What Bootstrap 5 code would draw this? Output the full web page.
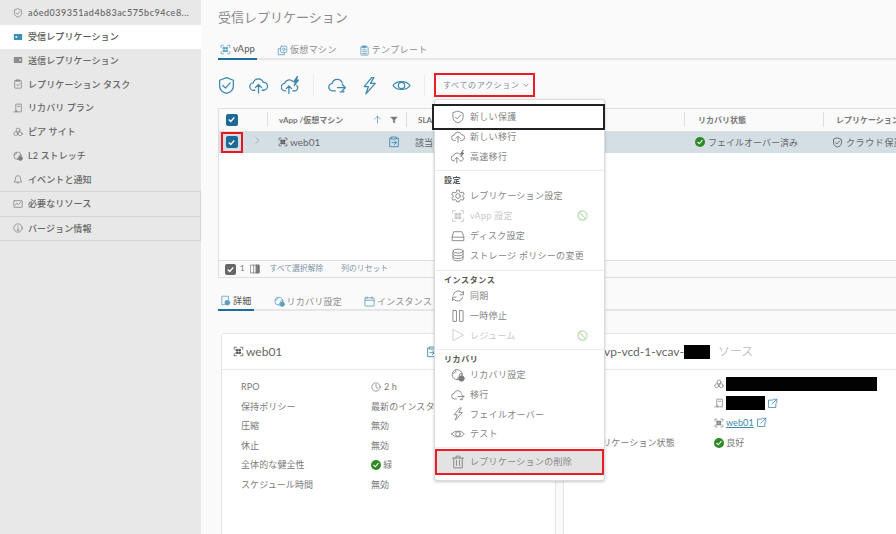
<!DOCTYPE html>
<html lang="ja">
<head>
<meta charset="utf-8">
<title>受信レプリケーション</title>
<link rel="stylesheet" href="https://cdn.jsdelivr.net/npm/bootstrap@5.3.0/dist/css/bootstrap.min.css">
<style>
html,body{height:534px;overflow:hidden;background:#fafafa;font-family:"Lato","Noto Sans CJK JP",sans-serif;font-size:9px;color:#6d6d6d}
.ico{width:12px;height:12px;flex:none;fill:none;stroke:currentColor;stroke-width:2.6;stroke-linecap:round;stroke-linejoin:round}
.shell{width:896px;height:534px;overflow:hidden}
.side{width:201px;flex:none;background:#e7e8e7;padding-top:1px}
.side-row{display:flex;align-items:center;gap:5px;height:23.8px;padding-left:13px;color:#666;letter-spacing:.1px;font-weight:500;text-decoration:none}
.side-row .ico{width:10px;height:10px;color:#7c7c7c}
.side-row.on{background:#fff;color:#555}
.side-row.on .ico{color:#3f8db5}
.side-id{letter-spacing:.5px}
.side-box{border:1px solid #d2d3d2;border-width:1px 1px 0 0;height:24.5px}
.side-box.end{border-bottom-width:1px;height:25px}
.pane{flex:1;min-width:0;padding-left:17px;position:relative}
.page-title{font-size:13px;font-weight:400;color:#8a8a8a;margin:0;padding-top:9px;height:40px;line-height:17px}
.tabbar{display:flex;border-bottom:2px solid #e6e6e6;height:20px;margin:0;padding:0;list-style:none}
.tabbar a{display:flex;align-items:center;gap:2px;height:20px;padding:0 2px;color:#8c8c8c;text-decoration:none;letter-spacing:.35px}
.tabbar .ico{width:11px;height:11px;color:#5d9dbd}
.tabbar a.on{color:#555;border-bottom:2px solid #1b6f9c;font-size:9.5px;letter-spacing:.1px}
.tabs-top{gap:18px}
.tabs-low{gap:18px;margin-top:14px;height:19px}
.tabs-low a,.tabs-low a.on{height:19px;font-size:9px;letter-spacing:.25px}
.tools{display:flex;align-items:center;height:24px;margin-top:13px}
.tool{color:#3c87ad;display:flex;width:32px;justify-content:center}
.tool-first{margin-left:-8px}
.tool .ico{width:19px;height:19px;stroke-width:2.4}
.tool-sep{width:1px;height:22px;background:#ececec;margin:0 7px}
.act-btn{--bs-btn-padding-x:7px;--bs-btn-padding-y:0;--bs-btn-font-size:8px;--bs-btn-color:#7c8f9b;--bs-btn-border-color:#ee1c25;--bs-btn-border-width:2px;--bs-btn-border-radius:0;--bs-btn-line-height:20px;display:flex;align-items:center;gap:3px;width:101px;white-space:nowrap;letter-spacing:.65px;margin-left:2px}
.gridbox{margin-top:11px;height:170px;background:#fff;border:1px solid #dfdfdf;border-right:0;border-radius:2px 0 0 2px;display:flex;flex-direction:column}
.gridbox table{table-layout:fixed;width:678px;margin:0;--bs-table-bg:transparent;--bs-table-color:#6d6d6d}
.gridbox th,.gridbox td{padding:0;border:0;vertical-align:middle;white-space:nowrap;overflow:hidden}
.gridbox thead th{height:22px;background:#fafafa;font-size:8px;font-weight:700;color:#777;border-bottom:1px solid #e0e0e0}
.gridbox tbody td{height:22px;background:#d4dee5;color:#666;font-size:9px}
.cellin{display:flex;align-items:center;height:100%;gap:3px}
.sepl{border-left:1px solid #dedede;height:15px}
.checkmark{width:12px;height:12px;border-radius:2px;background:#1d6a96;display:inline-flex;align-items:center;justify-content:center}
.checkmark svg{width:9px;height:9px;fill:none;stroke:#fff;stroke-width:5}
.hl-check{display:inline-flex;align-items:center;justify-content:center;width:22px;height:21px;border:2px solid #e8141f}
.gfoot{margin-top:auto;height:17px;border-top:1px solid #dfdfdf;background:#fafafa;display:flex;align-items:center;padding-left:6px;font-size:7.8px;color:#7d95a4}
.gfoot .checkmark{background:#666;width:11px;height:11px}
.cards{display:flex;gap:7px;margin-top:22px;margin-left:3px}
.pcard{--bs-card-border-color:#e4e4e4;--bs-card-border-radius:3px;--bs-card-bg:#fff;height:220px;flex:none;width:335px}
.pcard.right{width:340px}
.pcard-top{height:36px;border-bottom:1px solid #e8e8e8;display:flex;align-items:center;font-size:12px;color:#666}
.dl-row{display:flex;height:19.6px;align-items:center;font-size:9px;color:#7a7a7a;letter-spacing:.1px}
.dl-key{width:130px}
.redact{background:#000;height:14px;display:inline-block}
.okdot{width:10px;height:10px;border-radius:50%;background:#2e8a24;display:inline-flex;align-items:center;justify-content:center;flex:none}
.okdot svg{width:8px;height:8px;fill:none;stroke:#fff;stroke-width:5}
.ext{color:#3c87ad;width:11px;height:11px}
.pop{--bs-dropdown-padding-y:0;--bs-dropdown-min-width:170px;--bs-dropdown-border-color:#dcdcdc;--bs-dropdown-border-radius:3px;--bs-dropdown-font-size:9px;--bs-dropdown-divider-margin-y:0;--bs-dropdown-divider-bg:#ececec;--bs-dropdown-link-color:#858585;--bs-dropdown-header-padding-x:0;--bs-dropdown-header-padding-y:0;--bs-dropdown-header-color:#555;display:block;position:absolute;left:233px;top:99px;width:171px;height:382px;padding-top:6px;box-shadow:0 1px 3px rgba(0,0,0,.22);letter-spacing:.3px;font-size:9px;z-index:5}
.pop .dropdown-item{display:flex;align-items:center;gap:5px;height:19.7px;padding:0 0 0 16px;font-size:9px;position:relative}
.pop .dropdown-item .ico{width:14px;height:14px;color:#7c7c7c;stroke-width:2.2}
.pop .dropdown-item.off{color:#c9c9c9}
.pop .dropdown-item.off .ico{color:#c9c9c9}
.pop .dropdown-item.off .ban{color:#b5dcae;width:11px;height:11px;margin-left:auto;margin-right:16px;stroke-width:3.8}
.pop .dropdown-item.first{outline:2px solid #222;margin:0 -1px -1px;height:22px;padding-left:17px;background:#fff}
.pop .dropdown-divider{margin:4px 0 3px}
.pop .dropdown-divider.wide{margin-top:5px}
.pop .dropdown-divider.tight{margin:3px 0 1px}
.pop .dropdown-header{height:12px;line-height:12px;padding:0 0 0 9px;font-size:8px;font-weight:700;color:#555;letter-spacing:.6px}
.pop .dropdown-item.del{height:26px;margin:0;background:#e2e3e2;border:2px solid #ee1c25;padding-left:14px;color:#8a8a8a}
.link-web{color:#3c87ad;text-decoration:underline}
</style>
</head>
<body>
<svg width="0" height="0" class="position-absolute">
<defs>
<symbol id="shield" viewBox="0 0 36 36"><path d="M18 3 31 8V19C31 26 25 31 18 33 11 31 5 26 5 19V8Z"/><path d="M11 18l5 5 9-10"/></symbol>
<symbol id="cloudup" viewBox="0 0 36 36"><path d="M11 27H9A7 7 0 0 1 8 13 10 10 0 0 1 27 12 7.5 7.5 0 0 1 28 27H25"/><path d="M18 32V17M12 22l6-6 6 6"/></symbol>
<symbol id="cloudbolt" viewBox="0 0 36 36"><path d="M9 28H8A7 7 0 0 1 7 14 9 9 0 0 1 22 10"/><path d="M22 28H27A6 6 0 0 0 30 18"/><path d="M15 33V19M10 24l5-5 5 5"/><path d="M31 1 24 11H28L25 18 33 8H29Z" fill="currentColor"/></symbol>
<symbol id="cloudmove" viewBox="0 0 36 36"><path d="M14 28H9A7 7 0 0 1 8 14 10 10 0 0 1 27 13"/><path d="M18 22H33M27 16l6 6-6 6"/><path d="M30 29V30H23"/></symbol>
<symbol id="bolt" viewBox="0 0 36 36"><path d="M22 3 8 20H16L11 34 29 14H20L26 3Z"/></symbol>
<symbol id="eye" viewBox="0 0 36 36"><path d="M2 18C8 8 28 8 34 18 28 28 8 28 2 18Z"/><circle cx="18" cy="18" r="6"/></symbol>
<symbol id="vapp" viewBox="0 0 36 36"><path d="M4 11V4H11M25 4H32V11M32 25V32H25M11 32H4V25"/><path d="M11 11h5v5h-5zM20 11h5v5h-5zM11 20h5v5h-5zM20 20h5v5h-5z" fill="currentColor"/></symbol>
<symbol id="vm" viewBox="0 0 36 36"><rect x="12" y="4" width="20" height="20" rx="3"/><path d="M12 12H4V32H24V24"/><circle cx="22" cy="14" r="4"/></symbol>
<symbol id="tpl" viewBox="0 0 36 36"><rect x="6" y="6" width="24" height="27" rx="2"/><rect x="13" y="3" width="10" height="6" fill="currentColor"/><path d="M12 16H24M12 22H24M12 28H24"/></symbol>
<symbol id="inrep" viewBox="0 0 36 36"><rect x="3" y="7" width="30" height="22" fill="currentColor" stroke="none"/><rect x="9" y="15" width="6" height="6" fill="#fff" stroke="none"/></symbol>
<symbol id="outrep" viewBox="0 0 36 36"><rect x="3" y="7" width="30" height="22" fill="currentColor" stroke="none" opacity=".85"/><rect x="22" y="15" width="6" height="6" fill="#e7e8e7" stroke="none"/></symbol>
<symbol id="task" viewBox="0 0 36 36"><rect x="6" y="6" width="24" height="27" rx="2"/><rect x="13" y="3" width="10" height="5"/><path d="M12 20l5 5 8-9"/></symbol>
<symbol id="plan" viewBox="0 0 36 36"><path d="M10 30V4H30V32H14"/><path d="M3 32H14V26"/><path d="M16 12H24"/></symbol>
<symbol id="peer" viewBox="0 0 36 36"><circle cx="18" cy="11" r="7"/><circle cx="10" cy="24" r="7"/><circle cx="26" cy="24" r="7"/></symbol>
<symbol id="globe" viewBox="0 0 36 36"><circle cx="16" cy="17" r="13"/><path d="M4 13C12 15 14 8 12 5M16 30C14 24 22 24 22 18S27 14 28 14"/><circle cx="27" cy="27" r="7" fill="currentColor"/></symbol>
<symbol id="bell" viewBox="0 0 36 36"><path d="M5 28C9 24 9 20 9 15A9 9 0 0 1 27 15C27 20 27 24 31 28Z"/><path d="M15 32H21"/></symbol>
<symbol id="chart" viewBox="0 0 36 36"><rect x="3" y="6" width="30" height="24" rx="2"/><path d="M8 23 14 15 20 20 28 12"/></symbol>
<symbol id="info" viewBox="0 0 36 36"><circle cx="18" cy="18" r="15"/><path d="M18 16V26M15 26H21M18 10V11"/></symbol>
<symbol id="gear" viewBox="0 0 36 36"><circle cx="18" cy="18" r="6"/><path d="M15 3H21L22 8 26 10 31 8 34 14 30 17V20L34 23 31 29 26 27 22 29 21 33H15L14 29 10 27 5 29 2 23 6 20V17L2 14 5 8 10 10 14 8Z"/></symbol>
<symbol id="disk" viewBox="0 0 36 36"><path d="M8 7H28L33 20V30H3V20Z"/><path d="M3 21H33"/></symbol>
<symbol id="db" viewBox="0 0 36 36"><ellipse cx="18" cy="8" rx="13" ry="5"/><path d="M5 8V28C5 31 11 33 18 33S31 31 31 28V8M5 15C5 18 11 20 18 20S31 18 31 15M5 22C5 25 11 27 18 27S31 25 31 22"/></symbol>
<symbol id="sync" viewBox="0 0 36 36"><path d="M6 15A13 13 0 0 1 29 10L32 6V15H23"/><path d="M30 21A13 13 0 0 1 7 26L4 30V21H13"/></symbol>
<symbol id="pause" viewBox="0 0 36 36"><rect x="5" y="4" width="9" height="28" rx="1"/><rect x="22" y="4" width="9" height="28" rx="1"/></symbol>
<symbol id="play" viewBox="0 0 36 36"><path d="M6 4 32 18 6 32Z"/></symbol>
<symbol id="ban" viewBox="0 0 36 36"><circle cx="18" cy="18" r="15"/><path d="M8 8 28 28"/></symbol>
<symbol id="trash" viewBox="0 0 36 36"><path d="M4 8H32M13 8V3H23V8M7 8V33H29V8M14 14V27M22 14V27"/></symbol>
<symbol id="detail" viewBox="0 0 36 36"><path d="M28 14V4H6V32H16"/><circle cx="24" cy="25" r="8" fill="currentColor"/></symbol>
<symbol id="cal" viewBox="0 0 36 36"><rect x="3" y="6" width="30" height="27" rx="2"/><path d="M3 14H33M10 3V9M26 3V9"/></symbol>
<symbol id="clock" viewBox="0 0 36 36"><circle cx="18" cy="18" r="15"/><path d="M18 9V19L25 23"/></symbol>
<symbol id="clip" viewBox="0 0 36 36"><path d="M11 6H5V32H31V6H25"/><rect x="11" y="3" width="14" height="6"/><path d="M12 20H25M19 14l6 6-6 6"/></symbol>
<symbol id="extl" viewBox="0 0 36 36"><path d="M18 7H5V31H29V18"/><path d="M20 4H32V16M32 4 16 20"/></symbol>
<symbol id="tick" viewBox="0 0 36 36"><path d="M7 18l8 8 14-16"/></symbol>
<symbol id="cols" viewBox="0 0 36 36"><rect x="3" y="4" width="30" height="28"/><path d="M13 4V32M23 4V32"/><rect x="23" y="4" width="10" height="28" fill="currentColor"/></symbol>
<symbol id="arrowup" viewBox="0 0 36 36"><path d="M18 32V5M7 16 18 5 29 16"/></symbol>
<symbol id="funnel" viewBox="0 0 36 36"><path d="M4 5H32L21 18V31L15 28V18Z" fill="currentColor"/></symbol>
<symbol id="chev" viewBox="0 0 36 36"><path d="M10 4 26 18 10 32"/></symbol>
<symbol id="chevd" viewBox="0 0 36 36"><path d="M5 12 18 26 31 12"/></symbol>
</defs>
</svg>
<div class="shell d-flex">
  <nav class="side">
    <a class="side-row side-id" href="#"><svg class="ico"><use href="#shield"/></svg>a6ed039351ad4b83ac575bc94ce8...</a>
    <a class="side-row on" href="#"><svg class="ico"><use href="#inrep"/></svg>受信レプリケーション</a>
    <a class="side-row" href="#"><svg class="ico"><use href="#outrep"/></svg>送信レプリケーション</a>
    <a class="side-row" href="#"><svg class="ico"><use href="#task"/></svg>レプリケーション タスク</a>
    <a class="side-row" href="#"><svg class="ico"><use href="#plan"/></svg>リカバリ プラン</a>
    <a class="side-row" href="#"><svg class="ico"><use href="#peer"/></svg>ピア サイト</a>
    <a class="side-row" href="#"><svg class="ico"><use href="#globe"/></svg>L2 ストレッチ</a>
    <a class="side-row" href="#"><svg class="ico"><use href="#bell"/></svg>イベントと通知</a>
    <a class="side-row side-box" href="#"><svg class="ico"><use href="#chart"/></svg>必要なリソース</a>
    <a class="side-row side-box end" href="#"><svg class="ico"><use href="#info"/></svg>バージョン情報</a>
  </nav>
  <main class="pane">
    <h1 class="page-title">受信レプリケーション</h1>
    <ul class="tabbar tabs-top">
      <li><a class="on" href="#"><svg class="ico"><use href="#vapp"/></svg>vApp</a></li>
      <li><a href="#"><svg class="ico"><use href="#vm"/></svg>仮想マシン</a></li>
      <li><a href="#"><svg class="ico"><use href="#tpl"/></svg>テンプレート</a></li>
    </ul>
    <div class="tools">
      <span class="tool tool-first"><svg class="ico"><use href="#shield"/></svg></span>
      <span class="tool"><svg class="ico"><use href="#cloudup"/></svg></span>
      <span class="tool"><svg class="ico"><use href="#cloudbolt"/></svg></span>
      <span class="tool-sep"></span>
      <span class="tool"><svg class="ico"><use href="#cloudmove"/></svg></span>
      <span class="tool"><svg class="ico"><use href="#bolt"/></svg></span>
      <span class="tool"><svg class="ico"><use href="#eye"/></svg></span>
      <span class="tool-sep"></span>
      <button type="button" class="btn act-btn">すべてのアクション<svg class="ico" style="width:6px;height:6px;stroke-width:5"><use href="#chevd"/></svg></button>
    </div>
    <div class="gridbox">
      <table class="table">
        <colgroup><col style="width:25px"><col style="width:24px"><col style="width:138px"><col style="width:278px"><col style="width:139px"><col style="width:74px"></colgroup>
        <thead>
          <tr>
            <th><div class="cellin justify-content-center"><span class="checkmark"><svg><use href="#tick"/></svg></span></div></th>
            <th><div class="cellin justify-content-end"><span class="sepl"></span></div></th>
            <th><div class="cellin" style="padding-left:11px"><span class="flex-grow-1">vApp /仮想マシン</span><svg class="ico" style="width:9px;height:9px;color:#3c87ad"><use href="#arrowup"/></svg><svg class="ico" style="width:8px;height:8px;margin:0 8px 0 5px"><use href="#funnel"/></svg></div></th>
            <th><div class="cellin"><span class="sepl" style="margin-right:8px"></span>SLA</div></th>
            <th><div class="cellin"><span class="sepl" style="margin-right:10px"></span>リカバリ状態</div></th>
            <th><div class="cellin"><span class="sepl" style="margin-right:9px"></span>レプリケーション</div></th>
          </tr>
        </thead>
        <tbody>
          <tr>
            <td><div class="cellin justify-content-center"><span class="hl-check"><span class="checkmark"><svg><use href="#tick"/></svg></span></span></div></td>
            <td><div class="cellin" style="padding-left:10px"><svg class="ico" style="width:7px;height:9px;color:#777;margin-bottom:3px"><use href="#chev"/></svg></div></td>
            <td><div class="cellin" style="padding-left:10px;gap:2px"><svg class="ico" style="width:10px;height:10px;color:#555"><use href="#vapp"/></svg><span class="flex-grow-1" style="font-size:10px">web01</span><svg class="ico" style="margin-right:6px;color:#3c87ad"><use href="#clip"/></svg></div></td>
            <td><div class="cellin" style="padding-left:9px">該当なし</div></td>
            <td><div class="cellin" style="padding-left:11px"><span class="okdot"><svg><use href="#tick"/></svg></span><span>フェイルオーバー済み</span></div></td>
            <td><div class="cellin" style="padding-left:9px"><svg class="ico" style="width:11px;height:11px;color:#555"><use href="#shield"/></svg><span style="letter-spacing:.6px">クラウド保護</span></div></td>
          </tr>
        </tbody>
      </table>
      <div class="gfoot">
        <span class="checkmark"><svg><use href="#tick"/></svg></span>
        <span class="text-secondary" style="margin-left:4px">1</span>
        <svg class="ico" style="width:10px;height:10px;color:#777;margin-left:5px"><use href="#cols"/></svg>
        <span style="margin-left:10px">すべて選択解除</span>
        <span style="margin-left:18px">列のリセット</span>
      </div>
    </div>
    <ul class="tabbar tabs-low">
      <li><a class="on" href="#"><svg class="ico"><use href="#detail"/></svg>詳細</a></li>
      <li><a href="#"><svg class="ico"><use href="#globe"/></svg>リカバリ設定</a></li>
      <li><a href="#"><svg class="ico"><use href="#cal"/></svg>インスタンス</a></li>
    </ul>
    <div class="cards">
      <section class="card pcard">
        <div class="pcard-top" style="padding-left:11px;gap:2px"><svg class="ico" style="width:11px;height:11px;color:#555"><use href="#vapp"/></svg><span class="flex-grow-1">web01</span><svg class="ico" style="color:#3c87ad;margin-right:117px"><use href="#clip"/></svg></div>
        <div style="padding:7px 0 0 19px">
          <div class="dl-row"><span class="dl-key">RPO</span><svg class="ico" style="width:10px;height:10px;margin-right:3px"><use href="#clock"/></svg>2 h</div>
          <div class="dl-row"><span class="dl-key">保持ポリシー</span>最新のインスタンス</div>
          <div class="dl-row"><span class="dl-key">圧縮</span>無効</div>
          <div class="dl-row"><span class="dl-key">休止</span>無効</div>
          <div class="dl-row"><span class="dl-key">全体的な健全性</span><span class="okdot me-1"><svg><use href="#tick"/></svg></span>緑</div>
          <div class="dl-row"><span class="dl-key">スケジュール時間</span>無効</div>
        </div>
      </section>
      <section class="card pcard right">
        <div class="pcard-top" style="padding-left:40px"><span>vp-vcd-1-vcav-</span><span class="redact" style="width:26px;margin:0 8px 0 0"></span><span style="color:#c4c4c4">ソース</span></div>
        <div style="padding:4px 0 0 20px">
          <div class="dl-row"><span class="dl-key">名前</span><svg class="ico" style="width:10px;height:10px;margin-right:2px"><use href="#peer"/></svg><span class="redact" style="width:151px"></span></div>
          <div class="dl-row"><span class="dl-key">組織</span><svg class="ico" style="width:10px;height:10px;margin-right:2px"><use href="#plan"/></svg><span class="redact" style="width:39px"></span><svg class="ico ext ms-1"><use href="#extl"/></svg></div>
          <div class="dl-row"><span class="dl-key">vApp</span><svg class="ico" style="width:10px;height:10px;margin-right:2px"><use href="#vapp"/></svg><a class="link-web" href="#">web01</a><svg class="ico ext ms-1"><use href="#extl"/></svg></div>
          <div class="dl-row"><span class="dl-key">レプリケーション状態</span><span class="okdot me-1"><svg><use href="#tick"/></svg></span>良好</div>
        </div>
      </section>
    </div>
    <div class="dropdown-menu show pop">
      <a class="dropdown-item first" href="#"><svg class="ico"><use href="#shield"/></svg>新しい保護</a>
      <a class="dropdown-item" href="#"><svg class="ico"><use href="#cloudup"/></svg>新しい移行</a>
      <a class="dropdown-item" href="#"><svg class="ico"><use href="#cloudbolt"/></svg>高速移行</a>
      <div class="dropdown-divider"></div>
      <div class="dropdown-header">設定</div>
      <a class="dropdown-item" href="#"><svg class="ico"><use href="#gear"/></svg>レプリケーション設定</a>
      <a class="dropdown-item off" href="#"><svg class="ico"><use href="#vapp"/></svg>vApp 設定<svg class="ico ban"><use href="#ban"/></svg></a>
      <a class="dropdown-item" href="#"><svg class="ico"><use href="#disk"/></svg>ディスク設定</a>
      <a class="dropdown-item" href="#"><svg class="ico"><use href="#db"/></svg>ストレージ ポリシーの変更</a>
      <div class="dropdown-divider wide"></div>
      <div class="dropdown-header">インスタンス</div>
      <a class="dropdown-item" href="#"><svg class="ico"><use href="#sync"/></svg>同期</a>
      <a class="dropdown-item" href="#"><svg class="ico"><use href="#pause"/></svg>一時停止</a>
      <a class="dropdown-item off" href="#"><svg class="ico"><use href="#play"/></svg>レジューム<svg class="ico ban"><use href="#ban"/></svg></a>
      <div class="dropdown-divider"></div>
      <div class="dropdown-header">リカバリ</div>
      <a class="dropdown-item" href="#"><svg class="ico"><use href="#globe"/></svg>リカバリ設定</a>
      <a class="dropdown-item" href="#"><svg class="ico"><use href="#cloudmove"/></svg>移行</a>
      <a class="dropdown-item" href="#"><svg class="ico"><use href="#bolt"/></svg>フェイルオーバー</a>
      <a class="dropdown-item" href="#"><svg class="ico"><use href="#eye"/></svg>テスト</a>
      <div class="dropdown-divider tight"></div>
      <a class="dropdown-item del" href="#"><svg class="ico"><use href="#trash"/></svg>レプリケーションの削除</a>
    </div>
  </main>
</div>
<script src="https://cdn.jsdelivr.net/npm/bootstrap@5.3.0/dist/js/bootstrap.bundle.min.js"></script>
</body>
</html>
